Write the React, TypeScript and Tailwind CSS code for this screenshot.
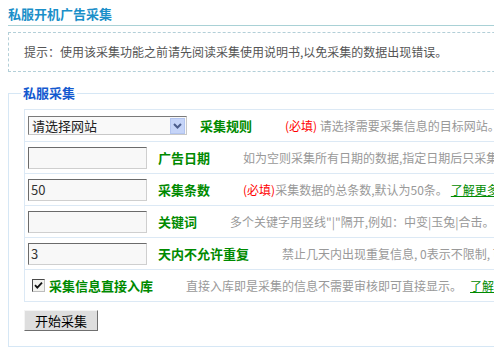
import React from "react";

const font = { fontFamily: '"Noto Sans CJK SC", "Noto Sans", sans-serif' };

function TextInput({ value }: { value?: string }) {
  return (
    <div className="w-[119px] h-[22px] border border-t-[#6b6b6b] border-l-[#6b6b6b] border-r-[#cfcfcf] border-b-[#cfcfcf] bg-[#f8f8f8] flex items-center pl-[2px] text-[13px] text-[#333] leading-none shrink-0">
      {value}
    </div>
  );
}

function Label({ children, ml }: { children: React.ReactNode; ml: string }) {
  return (
    <span className={`${ml} text-[13px] font-bold text-[#008a00] leading-[16px] whitespace-nowrap shrink-0`}>{children}</span>
  );
}

function Desc({ children }: { children: React.ReactNode }) {
  return <span className="ml-[33px] text-[12px] text-[#999] leading-[16px] whitespace-nowrap">{children}</span>;
}

function Required() {
  return <span className="text-[#ff0000]">(必填)</span>;
}

function More({ ml }: { ml: string }) {
  return <span className={`${ml} text-[#008a00] underline`}>了解更多</span>;
}

export default function App() {
  return (
    <div className="w-[494px] h-[349px] overflow-hidden bg-white" style={font}>
      <div className="w-[640px] pl-[8px]">
        <div className="pt-[6px] pb-[3px] leading-[16px] text-[13px] font-bold text-[#1b8fc9] border-b border-[#a9d1d6]">
          私服开机广告采集
        </div>
        <div className="mt-[6px] h-[40px] border border-dashed border-[#b3cfd8] flex items-center pl-[15px] text-[12px] text-[#555]">
          提示：使用该采集功能之前请先阅读采集使用说明书,以免采集的数据出现错误。
        </div>
        <fieldset className="mt-[13px] border border-[#d6e7f5] pl-[12px] pt-[8px] pb-[15px]">
          <legend className="px-[2px] text-[13px] font-bold text-[#1459cf] leading-[16px]">私服采集</legend>
          <div className="ml-[3px] border-t border-l border-[#dce9f5]">
            <div className="h-[32px] border-b border-[#dce9f5] flex items-center pl-[3px]">
              <div className="w-[159px] h-[19px] border border-[#7a7a7a] border-r-[#c8c8c8] border-b-[#c8c8c8] bg-[#f9f9f9] flex items-center justify-between pl-[3px] pr-[1px] shrink-0">
                <span className="text-[13px] text-[#222] leading-none">请选择网站</span>
                <span className="w-[15px] h-[16px] bg-[#c5d4f8] border border-[#b2c4ef] flex items-center justify-center">
                  <svg width="9" height="6" viewBox="0 0 9 6">
                    <path d="M1 1 L4.5 4.5 L8 1" fill="none" stroke="#4c5d8c" strokeWidth="2" />
                  </svg>
                </span>
              </div>
              <Label ml="ml-[13px]">采集规则</Label>
              <Desc>
                <Required /> 请选择需要采集信息的目标网站。
              </Desc>
            </div>
            <div className="h-[32px] border-b border-[#dce9f5] flex items-center pl-[3px]">
              <TextInput />
              <Label ml="ml-[11px]">广告日期</Label>
              <Desc>如为空则采集所有日期的数据,指定日期后只采集该日期之后的数据。</Desc>
            </div>
            <div className="h-[32px] border-b border-[#dce9f5] flex items-center pl-[3px]">
              <TextInput value="50" />
              <Label ml="ml-[11px]">采集条数</Label>
              <Desc>
                <Required />采集数据的总条数,默认为50条。<More ml="ml-[3px]" />
              </Desc>
            </div>
            <div className="h-[32px] border-b border-[#dce9f5] flex items-center pl-[3px]">
              <TextInput />
              <Label ml="ml-[11px]">关键词</Label>
              <Desc>多个关键字用竖线"|"隔开,例如：中变|玉兔|合击。</Desc>
            </div>
            <div className="h-[32px] border-b border-[#dce9f5] flex items-center pl-[3px]">
              <TextInput value="3" />
              <Label ml="ml-[11px]">天内不允许重复</Label>
              <Desc>禁止几天内出现重复信息, 0表示不限制, 可以有效防止重复采集。</Desc>
            </div>
            <div className="h-[32px] border-b border-[#dce9f5] flex items-center pl-[7px]">
              <span className="w-[13px] h-[13px] border border-[#4a4a4a] border-r-[#bdbdbd] border-b-[#bdbdbd] bg-[#f3f3ef] flex items-center justify-center shrink-0">
                <svg width="9" height="9" viewBox="0 0 9 9">
                  <path d="M1 4.2 L3.3 6.6 L8 1.6" fill="none" stroke="#111" strokeWidth="1.8" />
                </svg>
              </span>
              <Label ml="ml-[4px]">采集信息直接入库</Label>
              <Desc>
                直接入库即是采集的信息不需要审核即可直接显示。<More ml="ml-[8px]" />
              </Desc>
            </div>
          </div>
          <button className="mt-[8px] ml-[3px] w-[74px] h-[21px] bg-[#dedede] border border-t-[#f4f4f4] border-l-[#f4f4f4] border-r-[#6f6f6f] border-b-[#6f6f6f] text-[13px] text-black leading-none flex items-center justify-center">
            开始采集
          </button>
        </fieldset>
      </div>
    </div>
  );
}
